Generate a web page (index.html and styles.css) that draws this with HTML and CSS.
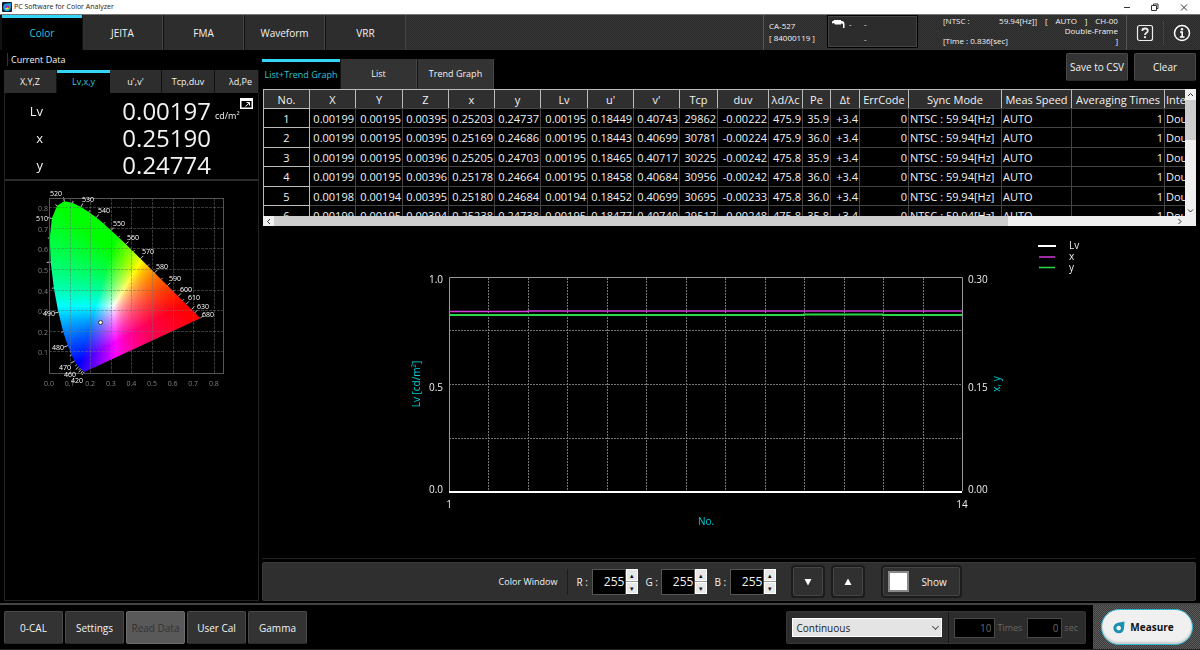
FILE: index.html
```html
<!DOCTYPE html>
<html lang="en">
<head>
    <meta charset="UTF-8">
    <meta name="viewport" content="width=device-width, initial-scale=1.0">
    <title>PC Software for Color Analyzer</title>
    <link rel="stylesheet" href="styles.css">
</head>
<body>
    <div class="title-bar">
        <svg class="app-icon" viewBox="0 0 10 10">
            <rect width="10" height="10" rx="1" fill="#0b1a2c"/>
            <circle cx="5" cy="5.4" r="3.8" fill="#19a7e0"/>
            <path d="M5 1.6 L9 1 L8.8 5.4 Z" fill="#19a7e0"/>
            <path d="M5 5.4 V3.2 A2.2 2.2 0 0 1 7 6.3 Z" fill="#e8302a"/>
            <path d="M5 5.4 L7 6.3 A2.2 2.2 0 0 1 3 6.3 Z" fill="#f4e61c"/>
            <path d="M5 5.4 L3 6.3 A2.2 2.2 0 0 1 5 3.2 Z" fill="#b02bd0"/>
        </svg>
        <span class="app-title">PC Software for Color Analyzer</span>
        <svg class="window-icons" viewBox="0 0 66 12" fill="none" stroke="#333">
            <path d="M1 6.5 H7"/>
            <path d="M28.5 4.5 H33.5 V9.5 H28.5 Z M30.5 4.5 V3 H35 V7.5 H33.5"/>
            <path d="M58 3.5 L64 9.5 M64 3.5 L58 9.5"/>
        </svg>
    </div>

    <header class="header">
        <nav class="main-tabs">
            <button class="main-tab active">Color</button>
            <button class="main-tab">JEITA</button>
            <button class="main-tab">FMA</button>
            <button class="main-tab">Waveform</button>
            <button class="main-tab">VRR</button>
        </nav>
        <div class="device">
            <span>CA-527</span>
            <span>[ 84000119 ]</span>
        </div>
        <div class="probe">
            <svg class="probe-icon" viewBox="0 0 13 10">
                <path d="M0 2.5 L2 1.5 V1 H9 V2 H10.5 Q12.5 2.5 12.5 5 V9 H11 V5.5 Q11 4.5 9 4.5 V5.5 H3 L2 4 L0 4.5 Z" fill="#fff"/>
            </svg>
            <span>-</span><span>-</span>
            <span class="probe-second">-</span>
        </div>
        <div class="status">
            <div class="status-row"><span class="status-sync"><span>[NTSC :</span><span>59.94[Hz]]</span></span><span>[</span><span>AUTO</span><span>]</span><span>CH-00</span></div>
            <div class="status-row end"><span>Double-Frame</span></div>
            <div class="status-row"><span>[Time : 0.836[sec]</span><span>]</span></div>
        </div>
        <div class="header-icons">
            <button class="icon-btn" aria-label="Help">
                <svg viewBox="0 0 18 18" fill="none" stroke="#eee">
                    <rect x="1.5" y="1.5" width="15" height="15" rx="2" stroke-width="1.2"/>
                    <path d="M6.3 7 Q6.3 4.5 9 4.5 Q11.8 4.5 11.8 6.8 Q11.8 8.2 10.2 9 Q9 9.7 9 11" stroke-width="1.8"/>
                    <circle cx="9" cy="13.2" r="1.1" fill="#eee" stroke="none"/>
                </svg>
            </button>
            <button class="icon-btn" aria-label="Information">
                <svg viewBox="0 0 18 18" fill="none" stroke="#fff">
                    <circle cx="9" cy="9" r="7.5" stroke-width="1.5"/>
                    <circle cx="9" cy="5.3" r="1.2" fill="#fff" stroke="none"/>
                    <path d="M7 8 H9.2 V13 M6.8 13 H11.5" stroke-width="1.6"/>
                </svg>
            </button>
        </div>
    </header>

    <main class="content">
        <section class="current">
            <h2 class="section-title">Current Data</h2>
            <div class="sub-tabs">
                <button class="sub-tab">X,Y,Z</button>
                <button class="sub-tab active">Lv,x,y</button>
                <button class="sub-tab">u',v'</button>
                <button class="sub-tab">Tcp,duv</button>
                <button class="sub-tab">λd,Pe</button>
            </div>
            <div class="values">
                <button class="popout" aria-label="Open window">
                    <svg viewBox="0 0 13 11">
                        <path d="M0 0 H13 V11 H0 Z M1.5 3 V9.5 H11.5 V3 Z" fill="#fff" fill-rule="evenodd"/>
                        <path d="M5.5 8.5 L9 5.2 M6.5 4.5 H9.5 V7.5" stroke="#fff" fill="none"/>
                    </svg>
                </button>
                <div class="value-row"><span class="name">Lv</span><span class="number">0.00197</span><span class="unit">cd/m²</span></div>
                <div class="value-row"><span class="name">x</span><span class="number">0.25190</span></div>
                <div class="value-row"><span class="name">y</span><span class="number">0.24774</span></div>
            </div>
            <div class="diagram">
                <canvas id="gamut" class="diagram-layer" width="250" height="210"></canvas>
                <svg id="gamutAxes" class="diagram-layer" viewBox="5 183 250 210"></svg>
            </div>
        </section>

        <section class="measurements">
            <div class="toolbar">
                <div class="view-tabs">
                    <button class="view-tab active">List+Trend Graph</button>
                    <button class="view-tab">List</button>
                    <button class="view-tab">Trend Graph</button>
                </div>
                <div class="toolbar-actions">
                    <button class="btn">Save to CSV</button>
                    <button class="btn">Clear</button>
                </div>
            </div>

            <div class="list">
                <div class="table-view">
                    <table>
                        <colgroup>
                            <col class="w46"><col class="w46"><col class="w47"><col class="w46"><col class="w46"><col class="w46"><col class="w47"><col class="w46"><col class="w46">
                            <col class="w38"><col class="w51"><col class="w34"><col class="w28"><col class="w29"><col class="w49"><col class="w93"><col class="w70"><col class="w93"><col class="w93">
                        </colgroup>
                        <thead>
                            <tr>
                                <th>No.</th><th>X</th><th>Y</th><th>Z</th><th>x</th><th>y</th><th>Lv</th><th>u'</th><th>v'</th><th>Tcp</th><th>duv</th><th>λd/λc</th><th>Pe</th><th>Δt</th><th>ErrCode</th><th>Sync Mode</th><th>Meas Speed</th><th>Averaging Times</th><th class="left">Integration</th>
                            </tr>
                        </thead>
                        <tbody id="dataRows"></tbody>
                    </table>
                </div>
                <div class="vscroll">
                    <svg viewBox="0 0 11 11"><path d="M3 7 L5.5 4.5 L8 7" fill="none" stroke="#333"/></svg>
                    <div class="vthumb"></div>
                    <svg class="last" viewBox="0 0 11 11"><path d="M3 4.5 L5.5 7 L8 4.5" fill="none" stroke="#333"/></svg>
                </div>
                <div class="hscroll">
                    <svg viewBox="0 0 11 11"><path d="M7 3 L4.5 5.5 L7 8" fill="none" stroke="#333"/></svg>
                    <div class="hthumb"></div>
                    <svg class="last" viewBox="0 0 11 11"><path d="M4.5 3 L7 5.5 L4.5 8" fill="none" stroke="#333"/></svg>
                </div>
            </div>

            <div class="trend">
                <svg id="trendGraph" class="trend-graph" viewBox="262 228 934 330"></svg>
            </div>

            <div class="color-window">
                <span class="color-title">Color Window</span>
                <div class="channel">
                    <label for="red">R :</label>
                    <input id="red" type="number" value="255" min="0" max="255">
                    <span class="spin"><button aria-label="Red up">▴</button><button aria-label="Red down">▾</button></span>
                </div>
                <div class="channel">
                    <label for="green">G :</label>
                    <input id="green" type="number" value="255" min="0" max="255">
                    <span class="spin"><button aria-label="Green up">▴</button><button aria-label="Green down">▾</button></span>
                </div>
                <div class="channel">
                    <label for="blue">B :</label>
                    <input id="blue" type="number" value="255" min="0" max="255">
                    <span class="spin"><button aria-label="Blue up">▴</button><button aria-label="Blue down">▾</button></span>
                </div>
                <div class="color-actions">
                    <button class="dark-btn" aria-label="Darker"><svg viewBox="0 0 8 8"><path d="M0.5 1 H7.5 L4 7.5 Z" fill="#fff"/></svg></button>
                    <button class="dark-btn" aria-label="Brighter"><svg viewBox="0 0 8 8"><path d="M0.5 7 H7.5 L4 0.5 Z" fill="#fff"/></svg></button>
                    <button class="dark-btn show-btn"><span class="swatch"></span>Show</button>
                </div>
            </div>
        </section>
    </main>

    <footer class="footer">
        <div class="footer-buttons">
            <button class="btn">0-CAL</button>
            <button class="btn">Settings</button>
            <button class="btn" disabled>Read Data</button>
            <button class="btn">User Cal</button>
            <button class="btn">Gamma</button>
        </div>
        <div class="mode">
            <div class="mode-select">
                <select aria-label="Measurement mode">
                    <option>Continuous</option>
                </select>
            </div>
            <div class="mode-limits">
                <input id="times" class="times" type="text" value="10" disabled>
                <label for="times">Times</label>
                <input id="sec" class="sec" type="text" value="0" disabled>
                <label for="sec">sec</label>
            </div>
        </div>
        <div class="measure-area">
            <button class="measure-btn">
                <svg viewBox="0 0 12 13"><path d="M11.5 0.5 L11 7 A5.3 5.3 0 1 1 5 1.8 Z M5.7 4.8 A2.3 2.3 0 1 0 5.71 4.8 Z" fill="#1b8fae" fill-rule="evenodd"/></svg>
                Measure
            </button>
        </div>
    </footer>

    <script src="script.js"></script>
</body>
</html>
```

FILE: styles.css
```css
* {
    box-sizing: border-box;
}
body {
    margin: 0;
    min-height: 100vh;
    display: flex;
    flex-direction: column;
    background-color: #000;
    color: #f2f2f2;
    font-family: "Open Sans", "Noto Sans", sans-serif;
    font-size: 10px;
    line-height: 12px;
}
button, input, select {
    font: inherit;
    color: inherit;
    margin: 0;
    padding: 0;
    border: none;
}
button {
    cursor: pointer;
    white-space: nowrap;
}
svg {
    display: block;
}

/* title bar */
.title-bar {
    display: flex;
    align-items: center;
    height: 15px;
    padding: 0 11px 0 2px;
    background: #fff;
    border-bottom: 1px solid #777;
    color: #222;
}
.app-icon {
    width: 10px;
    height: 10px;
}
.app-title {
    margin-left: 2px;
    font-size: 7px;
}
.window-icons {
    width: 66px;
    height: 12px;
    margin-left: auto;
}

/* header */
.header {
    display: flex;
    height: 35px;
    background: repeating-conic-gradient(#2a2a2a 0 25%, #363636 0 50%) 0 0 / 2px 2px;
}
.main-tabs {
    display: flex;
    padding-left: 2px;
    background: #111;
}
.main-tab {
    width: 81px;
    background: #2d2d2d;
    border-left: 1px solid #111;
    border-right: 1px solid #444;
}
.main-tab.active {
    width: 80px;
    background: #000;
    color: #2fc4d8;
    border: none;
    border-top: 3px solid #35d6f5;
    padding-bottom: 2px;
}
.device {
    display: flex;
    flex-direction: column;
    justify-content: center;
    width: 64px;
    margin-left: auto;
    padding: 0 0 2px 5px;
    border-left: 1px solid #555;
    font-size: 8px;
}
.probe {
    display: grid;
    grid-template-columns: 17px 15px 1fr;
    align-items: center;
    width: 91px;
    margin-bottom: 2px;
    padding: 0 4px;
    background: #2c2c2c;
    border: 1px solid #000;
    outline: 1px solid #444;
    outline-offset: -2px;
    font-size: 8px;
}
.probe-icon {
    width: 13px;
    height: 10px;
}
.probe-second {
    grid-column: 3;
}
.status {
    width: 209px;
    padding: 1px 8px 0 25px;
    border-right: 1px solid #555;
    font-size: 8px;
    line-height: 10px;
}
.status-row {
    display: flex;
    justify-content: space-between;
}
.status-row.end {
    justify-content: flex-end;
}
.status-sync {
    display: flex;
    justify-content: space-between;
    width: 94px;
}
.header-icons {
    display: flex;
    align-items: center;
    padding-right: 1px;
}
.icon-btn {
    display: flex;
    align-items: center;
    justify-content: center;
    width: 36px;
    height: 24px;
    background: none;
}
.icon-btn + .icon-btn {
    border-left: 1px solid #444;
}
.icon-btn svg {
    width: 18px;
    height: 18px;
}

/* main content */
.content {
    flex: 1;
    display: flex;
    gap: 3px;
    padding: 3px 4px 2px;
}
.current {
    display: flex;
    flex-direction: column;
    width: 255px;
}
.section-title {
    margin: 0 0 4px 3px;
    padding-left: 3px;
    border-left: 1px solid #333;
    font-size: 9px;
    font-weight: normal;
    line-height: 13px;
}
.sub-tabs {
    display: grid;
    grid-template-columns: 53px 53px 52px 53px 1fr;
    height: 23px;
}
.sub-tab {
    background: #2d2d2d;
    border-right: 1px solid #111;
    font-size: 9px;
}
.sub-tab.active, .view-tab.active {
    background: #000;
    color: #2fc4d8;
    border: none;
    border-top: 3px solid #35d6f5;
    padding-bottom: 2px;
}
.sub-tab:last-child {
    padding-left: 8px;
}
.values {
    position: relative;
    height: 88px;
    padding-top: 4px;
    border: 1px solid #222;
    border-top: none;
    border-bottom: 2px solid #2a2a2a;
}
.value-row {
    display: flex;
    align-items: center;
    height: 27px;
}
.name {
    width: 38px;
    text-align: right;
    font-size: 13px;
}
.number {
    width: 168px;
    text-align: right;
    font-size: 24px;
}
.unit {
    margin: 10px 0 0 4px;
    font-size: 9px;
}
.popout {
    position: absolute;
    top: 5px;
    right: 5px;
    background: none;
}
.popout svg {
    width: 13px;
    height: 11px;
}
.diagram {
    flex: 1;
    display: grid;
    grid-template-rows: 210px;
    padding-top: 2px;
    border: 1px solid #222;
    border-top: none;
}
.diagram-layer {
    grid-area: 1 / 1;
    width: 250px;
    height: 210px;
}
.locus-label {
    fill: #fff;
    font-size: 7px;
    text-anchor: middle;
}
.scale-label {
    fill: #808080;
    font-size: 7px;
    text-anchor: middle;
}

.measurements {
    flex: 1;
    min-width: 0;
    display: flex;
    flex-direction: column;
}
.toolbar {
    display: flex;
    justify-content: space-between;
    height: 36px;
}
.view-tabs {
    display: flex;
    padding-top: 6px;
}
.view-tab {
    width: 77px;
    height: 30px;
    background: #333;
    border-left: 1px solid #151515;
    border-right: 1px solid #444;
    font-size: 9px;
}
.view-tab.active {
    width: 78px;
}
.toolbar-actions {
    display: flex;
    gap: 6px;
}
.btn {
    min-width: 62px;
    height: 28px;
    background: #333;
    border: 1px solid #4a4a4a;
    border-bottom-color: #2a2a2a;
    border-radius: 2px;
}

/* list */
.list {
    display: grid;
    grid-template-columns: 1fr 11px;
    grid-template-rows: 127px 10px;
    padding-left: 1px;
    margin-bottom: 2px;
}
.table-view {
    overflow: hidden;
}
table {
    width: 994px;
    table-layout: fixed;
    border-collapse: collapse;
    border-top: 1px solid #999;
    border-left: 1px solid #bbb;
    font-size: 11px;
    line-height: 15px;
}
.w28 { width: 28px; }
.w29 { width: 29px; }
.w34 { width: 34px; }
.w38 { width: 38px; }
.w46 { width: 46px; }
.w47 { width: 47px; }
.w49 { width: 49px; }
.w51 { width: 51px; }
.w70 { width: 70px; }
.w93 { width: 93px; }
tr {
    height: 19px;
}
tbody tr:nth-child(even) {
    height: 20px;
}
th, td {
    padding: 0 1px;
    border: 1px solid #444;
    text-align: right;
    white-space: nowrap;
}
th {
    background: #2f2f2f;
    border-color: #bbb;
    border-bottom-color: #444;
    font-weight: normal;
    text-align: center;
}
th:first-child, td:first-child {
    border-color: #bbb;
    text-align: center;
}
td:nth-child(2) {
    border-left-color: #444;
}
.left {
    text-align: left;
}
.vscroll {
    display: flex;
    flex-direction: column;
    background: #f0f0f0;
}
.vscroll svg, .hscroll svg {
    width: 11px;
    height: 11px;
}
.vthumb {
    height: 40px;
    background: #cdcdcd;
}
.vscroll .last {
    margin-top: auto;
}
.hscroll {
    grid-column: 1 / 3;
    display: flex;
    padding-right: 11px;
    background: #f0f0f0;
}
.hthumb {
    flex: 0 1 734px;
    background: #cdcdcd;
}
.hscroll .last {
    margin-left: auto;
}

/* trend graph */
.trend {
    flex: 1;
    border-bottom: 1px solid #222;
    margin-bottom: 3px;
}
.trend-graph {
    width: 934px;
    height: 330px;
    margin: 0 auto;
}
.trend-graph text {
    fill: #eee;
    font-size: 10px;
}
.trend-graph .axis-title {
    fill: #00d0d8;
    text-anchor: middle;
}

/* color window bar */
.color-window {
    display: flex;
    align-items: center;
    justify-content: center;
    height: 39px;
    padding-left: 3px;
    background: #2f2f2f;
    border: 1px solid #3a3a3a;
    border-radius: 2px;
}
.color-title {
    padding-right: 10px;
    margin-right: 8px;
    border-right: 1px solid #1c1c1c;
    line-height: 26px;
    font-size: 9px;
}
.channel {
    display: flex;
    align-items: center;
    margin-right: 7px;
}
.channel label {
    width: 16px;
}
.channel input {
    width: 34px;
    height: 26px;
    padding-right: 1px;
    background: #000;
    border: 1px solid #555;
    font-size: 12px;
    text-align: right;
    appearance: textfield;
}
.channel input::-webkit-inner-spin-button {
    display: none;
}
.spin {
    display: flex;
    flex-direction: column;
    gap: 1px;
    width: 12px;
    background: #999;
}
.spin button {
    height: 12px;
    background: #e8e8e8;
    border: 1px solid #fff;
    color: #111;
    font-size: 7px;
    line-height: 9px;
}
.color-actions {
    display: flex;
    gap: 6px;
    margin-left: 8px;
}
.dark-btn {
    display: flex;
    align-items: center;
    justify-content: center;
    width: 34px;
    height: 33px;
    background: #303030;
    border: 2px solid #1c1c1c;
    border-radius: 4px;
    box-shadow: inset 0 0 0 1px #444;
}
.dark-btn svg {
    width: 8px;
    height: 8px;
}
.show-btn {
    justify-content: flex-start;
    gap: 12px;
    width: 81px;
    margin-left: 10px;
    padding-left: 5px;
}
.swatch {
    width: 21px;
    height: 21px;
    background: #fff;
    border: 2px solid #888;
}

/* footer */
.footer {
    display: flex;
    height: 47px;
    border-top: 2px solid #444;
    border-bottom: 1px solid #222;
}
.footer-buttons {
    display: flex;
    gap: 2px;
    padding: 6px 4px;
}
.footer .btn {
    width: 59px;
    min-width: 0;
    height: 33px;
}
.footer .btn:disabled {
    background: #595959;
    border-color: #6c6c6c;
    color: #333;
}
.mode {
    display: flex;
    height: 33px;
    margin: 6px 7px 0 auto;
    background: #2c2c2c;
    border: 1px solid #363636;
    border-radius: 2px;
}
.mode-select {
    position: relative;
    padding: 6px 6px 0 5px;
}
.mode-select::after {
    content: "";
    position: absolute;
    top: 12px;
    right: 10px;
    width: 4px;
    height: 4px;
    border-right: 1px solid #555;
    border-bottom: 1px solid #555;
    transform: rotate(45deg);
}
.mode-select select {
    width: 150px;
    height: 19px;
    padding-left: 3px;
    background: #e4e4e4;
    color: #222;
    border: 1px solid #fff;
    border-radius: 0;
    appearance: none;
}
.mode-limits {
    display: flex;
    align-items: center;
    padding: 0 7px 0 5px;
    border-left: 1px solid #151515;
    color: #666;
    font-size: 9px;
}
.mode-limits input {
    height: 20px;
    padding-right: 3px;
    background: #000;
    border: 1px solid #484848;
    color: #666;
    font-size: 10px;
    text-align: right;
}
.mode-limits label {
    margin-left: 2px;
}
.mode-limits .times {
    width: 41px;
}
.mode-limits .sec {
    width: 35px;
    margin-left: 5px;
}
.measure-area {
    display: flex;
    align-items: center;
    justify-content: center;
    width: 107px;
    background: repeating-conic-gradient(#3a3a3a 0 25%, #5c5c5c 0 50%) 0 0 / 2px 2px;
}
.measure-btn {
    display: flex;
    align-items: center;
    justify-content: center;
    gap: 5px;
    width: 92px;
    height: 36px;
    padding-right: 6px;
    background: #f0f0f0;
    border: 1px solid #2fb4d0;
    border-radius: 18px;
    box-shadow: inset 0 -2px 2px #ccc;
    color: #111;
    font-weight: bold;
}
.measure-btn svg {
    width: 12px;
    height: 13px;
}
```

FILE: script.js
```js
const rows = [
    [1, "0.00199", "0.00195", "0.00395", "0.25203", "0.24737", "0.00195", "0.18449", "0.40743", "29862", "-0.00222", "475.9", "35.9", "+3.4", "0"],
    [2, "0.00199", "0.00195", "0.00395", "0.25169", "0.24686", "0.00195", "0.18443", "0.40699", "30781", "-0.00224", "475.9", "36.0", "+3.4", "0"],
    [3, "0.00199", "0.00195", "0.00396", "0.25205", "0.24703", "0.00195", "0.18465", "0.40717", "30225", "-0.00242", "475.8", "35.9", "+3.4", "0"],
    [4, "0.00199", "0.00195", "0.00396", "0.25178", "0.24664", "0.00195", "0.18458", "0.40684", "30956", "-0.00242", "475.8", "36.0", "+3.4", "0"],
    [5, "0.00198", "0.00194", "0.00395", "0.25180", "0.24684", "0.00194", "0.18452", "0.40699", "30695", "-0.00233", "475.8", "36.0", "+3.4", "0"],
    [6, "0.00199", "0.00195", "0.00394", "0.25238", "0.24738", "0.00195", "0.18477", "0.40749", "29517", "-0.00248", "475.8", "35.8", "+3.4", "0"]
];

// spectral locus: wavelength, x, y
const locus = [
    [420, 0.1714, 0.0051], [440, 0.1644, 0.0109], [450, 0.1566, 0.0177], [455, 0.1510, 0.0227],
    [460, 0.1440, 0.0297], [465, 0.1355, 0.0399], [470, 0.1241, 0.0578], [475, 0.1096, 0.0868],
    [480, 0.0913, 0.1327], [485, 0.0687, 0.2007], [490, 0.0454, 0.2950], [495, 0.0235, 0.4127],
    [500, 0.0082, 0.5384], [505, 0.0039, 0.6548], [510, 0.0139, 0.7502], [515, 0.0389, 0.8120],
    [520, 0.0743, 0.8338], [525, 0.1142, 0.8262], [530, 0.1547, 0.8059], [535, 0.1929, 0.7816],
    [540, 0.2296, 0.7543], [545, 0.2658, 0.7243], [550, 0.3016, 0.6923], [555, 0.3373, 0.6589],
    [560, 0.3731, 0.6245], [565, 0.4087, 0.5896], [570, 0.4441, 0.5547], [575, 0.4788, 0.5202],
    [580, 0.5125, 0.4866], [585, 0.5448, 0.4544], [590, 0.5752, 0.4242], [595, 0.6029, 0.3965],
    [600, 0.6270, 0.3725], [605, 0.6482, 0.3514], [610, 0.6658, 0.3340], [620, 0.6915, 0.3083],
    [630, 0.7079, 0.2920], [680, 0.7347, 0.2653]
];

const locusLabels = [
    [520, 56, 196], [530, 88, 202], [540, 104, 213], [550, 119, 226], [560, 133, 240],
    [570, 148, 254], [580, 162, 269], [590, 175, 281], [600, 186, 292], [610, 194, 300],
    [630, 203, 309], [680, 208, 317], [510, 42, 221], [490, 49, 316], [480, 58, 350],
    [470, 65, 370], [460, 70, 377], [420, 77, 383]
];

function fillTable() {
    const body = document.getElementById("dataRows");
    rows.forEach(data => {
        const row = body.insertRow();
        row.innerHTML = data.map(value => `<td>${value}</td>`).join("") +
            `<td class="left">NTSC : 59.94[Hz]</td><td class="left">AUTO</td><td>1</td><td class="left">Double-Frame</td>`;
    });
}

// chromaticity to drawing units
const px = x => 49 + x * 206;
const py = y => 373 - y * 206;

function drawGamut() {
    const ctx = document.getElementById("gamut").getContext("2d");
    const image = ctx.createImageData(250, 210);
    for (let j = 0; j < 210; j++) {
        for (let i = 0; i < 250; i++) {
            const x = (i + 5 - 49) / 206;
            const y = Math.max((373 - j - 183) / 206, 0.002);
            const X = x / y;
            const Z = (1 - x - y) / y;
            const rgb = [
                3.2406 * X - 1.5372 - 0.4986 * Z,
                -0.9689 * X + 1.8758 + 0.0415 * Z,
                0.0557 * X - 0.2040 + 1.0570 * Z
            ];
            const max = Math.max(...rgb);
            rgb.forEach((c, k) => {
                image.data[(j * 250 + i) * 4 + k] = 255 * Math.pow(Math.max(c / max, 0), 1 / 1.15);
            });
            image.data[(j * 250 + i) * 4 + 3] = 255;
        }
    }
    ctx.putImageData(image, 0, 0);

    // keep only the part inside the locus
    ctx.translate(-5, -183);
    ctx.globalCompositeOperation = "destination-in";
    ctx.beginPath();
    locus.forEach(p => ctx.lineTo(px(p[1]), py(p[2])));
    ctx.closePath();
    ctx.fill();

    ctx.globalCompositeOperation = "source-over";
    ctx.strokeStyle = "#ccc";
    locus.forEach((p, i) => {
        const a = locus[Math.max(i - 1, 0)];
        const b = locus[Math.min(i + 1, locus.length - 1)];
        const dx = b[1] - a[1];
        const dy = b[2] - a[2];
        const len = Math.hypot(dx, dy);
        const size = p[0] % 10 ? 2 : 4;
        ctx.beginPath();
        ctx.moveTo(px(p[1]), py(p[2]));
        ctx.lineTo(px(p[1]) - dy / len * size, py(p[2]) - dx / len * size);
        ctx.stroke();
    });
}

function drawGamutAxes() {
    let svg = "";
    for (let i = 1; i <= 8; i++) {
        const x = Math.round(px(i / 10)) + 0.5;
        const y = Math.round(py(i / 10)) - 0.5;
        svg += `<path d="M${x} 198 V373 M49 ${y} H224" stroke="#707070" stroke-opacity="0.5" stroke-dasharray="3 1"/>`;
        svg += `<text class="scale-label" x="43" y="${y + 3}">0.${i}</text>`;
    }
    for (let i = 0; i <= 8; i++) {
        svg += `<text class="scale-label" x="${px(i / 10)}" y="386">0.${i}</text>`;
    }
    svg += `<rect x="49.5" y="198.5" width="174" height="175" fill="none" stroke="#555"/>`;
    locusLabels.forEach(l => {
        svg += `<text class="locus-label" x="${l[1]}" y="${l[2]}">${l[0]}</text>`;
    });
    svg += `<circle cx="100.5" cy="322.5" r="2" fill="#fff" stroke="#333"/>`;
    document.getElementById("gamutAxes").innerHTML = svg;
}

function drawTrend() {
    let svg = "";
    for (let i = 1; i < 13; i++) {
        const x = Math.round(449 + i * 39.46) + 0.5;
        svg += `<path d="M${x} 278 V490" stroke="#777" stroke-dasharray="2 1"/>`;
    }
    [331, 385, 439].forEach(y => {
        svg += `<path d="M449 ${y - 0.5} H962" stroke="#777" stroke-dasharray="2 1"/>`;
    });
    svg += `<path d="M449.5 491 V277.5 H962.5 V491" fill="none" stroke="#999"/>
        <path d="M449 311.5 H528 V311 H962" fill="none" stroke="#d63ade" stroke-width="1.5"/>
        <path d="M449 315 H804 V314.5 H883 V315 H962" fill="none" stroke="#2ad84a" stroke-width="2"/>
        <path d="M449 492 H962" stroke="#fff" stroke-width="2"/>
        <text x="443" y="283" text-anchor="end">1.0</text>
        <text x="443" y="391" text-anchor="end">0.5</text>
        <text x="443" y="493" text-anchor="end">0.0</text>
        <text x="968" y="283">0.30</text>
        <text x="968" y="391">0.15</text>
        <text x="968" y="493">0.00</text>
        <text x="449" y="508" text-anchor="middle">1</text>
        <text x="962" y="508" text-anchor="middle">14</text>
        <text class="axis-title" x="706" y="525">No.</text>
        <text class="axis-title" transform="translate(420 384) rotate(-90)">Lv [cd/m²]</text>
        <text class="axis-title" transform="translate(1000 384) rotate(-90)">x, y</text>
        <path d="M1038 246 H1056" stroke="#fff" stroke-width="2"/>
        <path d="M1039 257 H1055" stroke="#d63ade" stroke-width="1.5"/>
        <path d="M1039 267.5 H1055" stroke="#2ad84a" stroke-width="1.5"/>
        <text x="1069" y="249">Lv</text>
        <text x="1069" y="260">x</text>
        <text x="1069" y="271">y</text>`;
    document.getElementById("trendGraph").innerHTML = svg;
}

fillTable();
drawGamut();
drawGamutAxes();
drawTrend();
```
